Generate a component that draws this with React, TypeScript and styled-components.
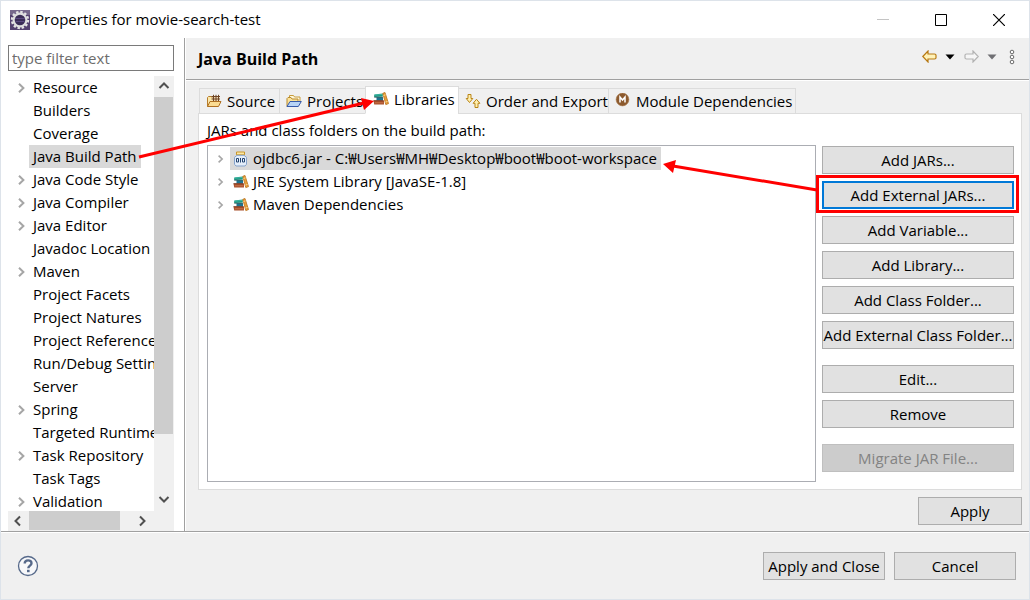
import React from "react";
import styled, { createGlobalStyle, css } from "styled-components";

const GlobalStyle = createGlobalStyle`
  * { box-sizing: border-box; }
  body {
    margin: 0;
    background: #f0f0f0;
    color: #000;
    font-family: "Open Sans", "Noto Sans CJK KR", sans-serif;
    font-size: 15px;
    line-height: 23px;
  }
  button, input { font: inherit; color: inherit; }
  ul { list-style: none; margin: 0; padding: 0; }
  svg { display: block; flex: none; }
`;

const Dialog = styled.div`
  position: relative;
  display: flex;
  flex-direction: column;
  height: 100vh;
  background: #f0f0f0;
  border: 1px solid #dde3ea;
`;

const TitleBar = styled.header`
  display: flex;
  align-items: center;
  flex: none;
  height: 37px;
  padding: 0 1px 0 9px;
  background: #fff;
`;

const WindowTitle = styled.span`
  flex: 1;
  margin-left: 5px;
  white-space: nowrap;
`;

const WindowButton = styled.button`
  display: flex;
  align-items: center;
  justify-content: center;
  width: 58px;
  height: 36px;
  padding: 0;
  border: 0;
  background: none;
`;

const Main = styled.main`
  display: flex;
  flex: 1;
  min-height: 0;
`;

const Sidebar = styled.nav`
  display: flex;
  flex-direction: column;
  flex: none;
  width: 184px;
  padding: 7px 10px 0 7px;
  gap: 5px;
  background: #fff;
  border-right: 1px solid #a0a0a0;
`;

const FilterInput = styled.input`
  width: 100%;
  height: 26px;
  padding: 0 3px;
  border: 1px solid #7a7a7a;
  border-radius: 0;
  background: #fff;
  outline: none;
  &::placeholder { color: #6d6d6d; opacity: 1; }
`;

const ScrollFrame = styled.div`
  display: grid;
  flex: 1;
  min-height: 0;
  grid-template-columns: minmax(0, 1fr) 20px;
  grid-template-rows: minmax(0, 1fr) 20px;
  background: #f0f0f0;
`;

const PageList = styled.ul`
  overflow: hidden;
  background: #fff;
`;

const PageRow = styled.li`
  display: flex;
  align-items: center;
  height: 23px;
`;

const Toggle = styled.span`
  display: flex;
  align-items: center;
  flex: none;
  width: 21px;
  padding-left: 9px;
`;

const PageLink = styled.a<{ $selected?: boolean }>`
  flex: none;
  padding: 0 4px;
  color: #000;
  text-decoration: none;
  white-space: nowrap;
  background: ${(p) => (p.$selected ? "#d9d9d9" : "transparent")};
`;

const ScrollTrack = styled.div<{ $horizontal?: boolean }>`
  display: flex;
  flex-direction: ${(p) => (p.$horizontal ? "row" : "column")};
  padding: ${(p) => (p.$horizontal ? "0 2px 0 0" : "0 0 2px")};
  background: #f0f0f0;
`;

const ScrollButton = styled.button`
  display: flex;
  align-items: center;
  justify-content: center;
  flex: none;
  width: 20px;
  height: 20px;
  padding: 0;
  border: 0;
  background: none;
`;

const ScrollRun = styled.div<{ $horizontal?: boolean }>`
  flex: 1;
  padding: ${(p) => (p.$horizontal ? "0 0 1px 1px" : "1px 1px 0 0")};
`;

const ScrollThumb = styled.div<{ $horizontal?: boolean; $size: number }>`
  background: #cdcdcd;
  width: ${(p) => (p.$horizontal ? p.$size + "%" : "100%")};
  height: ${(p) => (p.$horizontal ? "100%" : p.$size + "%")};
`;

const Page = styled.section`
  display: flex;
  flex-direction: column;
  flex: 1;
  min-width: 0;
  border-left: 1px solid #fff;
`;

const PageHeader = styled.div`
  display: flex;
  align-items: center;
  flex: none;
  height: 43px;
  padding: 0 14px 5px 12px;
  border-bottom: 1px solid #fff;
  box-shadow: inset 0 -1px #a0a0a0;
`;

const PageTitle = styled.h1`
  flex: 1;
  margin: 0;
  padding-top: 6px;
  font-size: 16px;
  font-weight: 700;
  line-height: 23px;
`;

const HistoryButton = styled.button<{ $gap: number }>`
  display: flex;
  padding: 0;
  margin-left: ${(p) => p.$gap}px;
  border: 0;
  background: none;
`;

const PageBody = styled.div`
  display: flex;
  flex-direction: column;
  flex: 1;
  min-height: 0;
  padding: 5px 7px 6px 12px;
`;

const TabList = styled.div`
  display: flex;
  align-items: flex-end;
  height: 28px;
  padding-left: 2px;
  z-index: 1;
`;

const Tab = styled.button<{ $active?: boolean; $width: number }>`
  display: flex;
  align-items: center;
  flex: none;
  width: ${(p) => p.$width}px;
  height: 26px;
  gap: 5px;
  padding: 0 0 0 6px;
  margin-left: -1px;
  border: 1px solid #dcdcdc;
  background: #f0f0f0;
  white-space: nowrap;
  ${(p) =>
    p.$active &&
    css`
      height: 28px;
      padding: 0 0 2px 7px;
      border-bottom-color: #fff;
      background: #fff;
    `}
`;

const TabPanel = styled.div`
  display: flex;
  flex-direction: column;
  flex: 1;
  min-height: 0;
  margin-top: -1px;
  padding: 5px 7px 7px 8px;
  border: 1px solid #dcdcdc;
  background: #fff;
`;

const Caption = styled.div`
  flex: none;
  margin-bottom: 3px;
`;

const Columns = styled.div`
  display: grid;
  flex: 1;
  min-height: 0;
  grid-template-columns: minmax(0, 1fr) 192px;
  gap: 6px;
`;

const EntryTree = styled.ul`
  && { padding-top: 1px; }
  border: 1px solid #abadb3;
  background: #fff;
  overflow: hidden;
`;

const EntryRow = styled.li`
  display: flex;
  align-items: center;
  height: 23px;
  padding-left: 9px;
`;

const Entry = styled.span<{ $selected?: boolean }>`
  display: flex;
  align-items: center;
  gap: 4px;
  padding: 0 4px 0 3px;
  margin-left: 5px;
  white-space: nowrap;
  background: ${(p) => (p.$selected ? "#d9d9d9" : "transparent")};
`;

const ButtonColumn = styled.div`
  display: flex;
  flex-direction: column;
  gap: 16px;
  padding-top: 1px;
`;

const ButtonGroup = styled.div`
  display: flex;
  flex-direction: column;
  gap: 7px;
`;

const PushButton = styled.button<{ $focused?: boolean; $width?: number }>`
  position: relative;
  flex: none;
  width: ${(p) => (p.$width ? p.$width + "px" : "100%")};
  height: 28px;
  padding: 0;
  border: 1px solid #adadad;
  border-radius: 0;
  background: #e1e1e1;
  line-height: 24px;
  white-space: nowrap;
  &:disabled {
    color: #838383;
    background: #cccccc;
    border-color: #bfbfbf;
  }
  ${(p) =>
    p.$focused &&
    css`
      border: 2px solid #0078d7;
      &::after {
        content: "";
        position: absolute;
        inset: -8px -7px -6px -8px;
        border: 3px solid #f00;
      }
    `}
`;

const ApplyRow = styled.div`
  display: flex;
  justify-content: flex-end;
  flex: none;
  margin-top: 7px;
`;

const Footer = styled.footer`
  display: flex;
  align-items: center;
  flex: none;
  gap: 9px;
  height: 68px;
  padding: 0 13px 0 16px;
  border-top: 1px solid #a0a0a0;
  box-shadow: inset 0 1px #fff;
`;

const HelpButton = styled.button`
  padding: 0;
  margin-right: auto;
  border: 0;
  background: none;
`;

const Annotations = styled.svg`
  position: absolute;
  top: -1px;
  left: -1px;
  pointer-events: none;
  z-index: 2;
`;

const Chevron = ({ size = 10, color = "#a6a6a6" }: { size?: number; color?: string }) => (
  <svg width={size} height={size} viewBox="0 0 10 10" fill="none" stroke={color} strokeWidth="2">
    <path d="M2 0.8 6.4 5 2 9.2" />
  </svg>
);

const rotations = { up: -90, down: 90, left: 180, right: 0 };
const ScrollArrow = ({ dir }: { dir: keyof typeof rotations }) => (
  <svg width="12" height="12" viewBox="0 0 12 12" fill="none" stroke="#505050" strokeWidth="2">
    <path d="M4 1.5 8.5 6 4 10.5" transform={`rotate(${rotations[dir]} 6 6)`} />
  </svg>
);

const EclipseIcon = () => (
  <svg width="20" height="20" viewBox="0 0 20 20">
    <rect width="20" height="20" fill="#54416f" />
    <path d="M0 0h20v5H0z" fill="#77698c" />
    <circle cx="10" cy="10" r="8" fill="none" stroke="#e4e4e4" strokeWidth="2.4" strokeDasharray="2.4 1.79" />
    <circle cx="10" cy="10" r="6.400" fill="#3b2d57" stroke="#dedede" strokeWidth="2.200" />
    <path d="M5 8.500h10M5.500 11.500h9" stroke="#5b4a80" />
  </svg>
);

const BooksIcon = () => (
  <svg width="16" height="16" viewBox="0 0 16 16">
    <path d="M1.200 3.400 9.800 2.600v3L1.200 6z" fill="#159a84" />
    <path d="M2 4.100 9.400 3.500" stroke="#4fc0ac" strokeWidth=".8" />
    <path d="M3.500 6.200h6.500v3.300H3.500z" fill="#1d7391" />
    <path d="M1.200 6.200h8.600" stroke="#1b4a4a" strokeWidth=".8" />
    <path d="M.5 9.500h10.500v4H1.200z" fill="#a8502c" />
    <path d="M.5 9.700h10" stroke="#6e2c17" strokeWidth=".8" />
    <path d="M2 11.800h8.500" stroke="#d07c50" strokeWidth=".8" />
    <path d="M9.800 2.300 12 1.500 15.500 12.600 12.800 13.600z" fill="#e8a03c" stroke="#b8701a" strokeWidth=".8" />
    <path d="M10.500 4.500l2-.6M12.400 11l2.200-.6" stroke="#fbd58a" />
  </svg>
);

const SourceIcon = () => (
  <svg width="16" height="16" viewBox="0 0 16 16">
    <path d="M1.500 13.500V4.500l1-1h3l1 1.500h6v3.500" fill="#fbe7a9" stroke="#b77d2b" />
    <path d="M6.500 3h7v5h-7z" fill="#efd9b4" />
    <path d="M5.500 3.500h8.500M5.500 6h8.500M7.500 1.800v6.200M10 1.800v6.200M12.500 1.800v6.200" stroke="#6f4524" />
    <path d="M1.500 13.500 4 8.500h11l-2.500 5z" fill="#fbdc92" stroke="#b07020" />
  </svg>
);

const ProjectsIcon = () => (
  <svg width="16" height="16" viewBox="0 0 16 16">
    <path d="M3.500 7V2.500h4l1 1.500h5.500V8" fill="#fff8dc" stroke="#c79c3d" />
    <path d="M1 13.500V5.500l1-1h3l1 1.500h6v3" fill="#fbe39a" stroke="#b98a2d" />
    <path d="M1 13.500 4 8.500h11.300l-3 5z" fill="#b8d4f6" stroke="#3659a8" />
  </svg>
);

const OrderIcon = () => (
  <svg width="16" height="16" viewBox="0 0 16 16" fill="#fff0b0" stroke="#b98416">
    <path d="M3 1.500h3v4h1.800L4.500 9.500 1.200 5.500H3z" />
    <path d="M10 14.500h3v-4.200h1.900L11.500 6.300 8.100 10.300H10z" />
  </svg>
);

const ModuleIcon = () => (
  <svg width="16" height="16" viewBox="0 0 16 16">
    <circle cx="7.500" cy="6.500" r="6.400" fill="#8c5a2e" stroke="#a97a4e" strokeWidth=".6" />
    <path d="M5 9.500v-5.500l2.500 3 2.500-3v5.500" fill="none" stroke="#fff" strokeWidth="1.500" />
  </svg>
);

const JarIcon = () => (
  <svg width="16" height="16" viewBox="0 0 16 16">
    <path d="M3.500 1h8v2.800h-8z" fill="#ffe9a0" stroke="#c8962a" />
    <path d="M4 4.300h7l2.500 2v7l-1.500 1.700H3L1.500 13.300v-7z" fill="#e4eefa" stroke="#86a3cb" />
    <path d="M3.500 7.500h2v3.500h-2zM7.500 7v4.500M9.500 7.500h2v3.500h-2z" fill="none" stroke="#26456f" />
  </svg>
);

const HistoryArrow = ({ forward }: { forward?: boolean }) => (
  <svg width="15" height="13" viewBox="0 0 15 13">
    <path
      d="M.8 6.500 6 1v3h6.500q1.500 0 1.500 1.200v2.600Q14 9 12.500 9H6v3z"
      transform={forward ? "rotate(180 7.500 6.500)" : undefined}
      fill={forward ? "#f6f6f6" : "#fff2b8"}
      stroke={forward ? "#b3b3b3" : "#b87a14"}
      strokeWidth="1.200"
    />
  </svg>
);

const Caret = ({ color }: { color: string }) => (
  <svg width="10" height="6" viewBox="0 0 10 6">
    <path d="M.5.500h9L5 5.500z" fill={color} />
  </svg>
);

const pages: { name: string; branch?: boolean }[] = [
  { name: "Resource", branch: true },
  { name: "Builders" },
  { name: "Coverage" },
  { name: "Java Build Path" },
  { name: "Java Code Style", branch: true },
  { name: "Java Compiler", branch: true },
  { name: "Java Editor", branch: true },
  { name: "Javadoc Location" },
  { name: "Maven", branch: true },
  { name: "Project Facets" },
  { name: "Project Natures" },
  { name: "Project References" },
  { name: "Run/Debug Settings" },
  { name: "Server" },
  { name: "Spring", branch: true },
  { name: "Targeted Runtimes" },
  { name: "Task Repository", branch: true },
  { name: "Task Tags" },
  { name: "Validation", branch: true },
];

const tabs = [
  { name: "Source", icon: <SourceIcon />, width: 81 },
  { name: "Projects", icon: <ProjectsIcon />, width: 87 },
  { name: "Libraries", icon: <BooksIcon />, width: 94 },
  { name: "Order and Export", icon: <OrderIcon />, width: 151 },
  { name: "Module Dependencies", icon: <ModuleIcon />, width: 188 },
];

const entries = [
  { name: "ojdbc6.jar - C:₩Users₩MH₩Desktop₩boot₩boot-workspace", icon: <JarIcon /> },
  { name: "JRE System Library [JavaSE-1.8]", icon: <BooksIcon /> },
  { name: "Maven Dependencies", icon: <BooksIcon /> },
];

const actions = [
  ["Add JARs...", "Add External JARs...", "Add Variable...", "Add Library...", "Add Class Folder...", "Add External Class Folder..."],
  ["Edit...", "Remove"],
  ["Migrate JAR File..."],
];

export default function App() {
  return (
    <>
      <GlobalStyle />
      <Dialog>
        <TitleBar>
          <EclipseIcon />
          <WindowTitle>Properties for movie-search-test</WindowTitle>
          <WindowButton aria-label="Minimize" disabled>
            <svg width="12" height="12"><path d="M0 5.500h12" stroke="#c4c4c4" /></svg>
          </WindowButton>
          <WindowButton aria-label="Maximize">
            <svg width="12" height="12"><path d="M.5.500h11v11H.5z" fill="none" stroke="#000" /></svg>
          </WindowButton>
          <WindowButton aria-label="Close">
            <svg width="12" height="12"><path d="M0 0l12 12M12 0L0 12" stroke="#000" strokeWidth="1.200" /></svg>
          </WindowButton>
        </TitleBar>

        <Main>
          <Sidebar>
            <FilterInput type="text" placeholder="type filter text" aria-label="type filter text" />
            <ScrollFrame>
              <PageList>
                {pages.map((p) => (
                  <PageRow key={p.name}>
                    <Toggle>{p.branch && <Chevron />}</Toggle>
                    <PageLink href="#" $selected={p.name === "Java Build Path"}>{p.name}</PageLink>
                  </PageRow>
                ))}
              </PageList>
              <ScrollTrack>
                <ScrollButton aria-label="Scroll up"><ScrollArrow dir="up" /></ScrollButton>
                <ScrollRun><ScrollThumb $size={86} /></ScrollRun>
                <ScrollButton aria-label="Scroll down"><ScrollArrow dir="down" /></ScrollButton>
              </ScrollTrack>
              <ScrollTrack $horizontal>
                <ScrollButton aria-label="Scroll left"><ScrollArrow dir="left" /></ScrollButton>
                <ScrollRun $horizontal><ScrollThumb $horizontal $size={88} /></ScrollRun>
                <ScrollButton aria-label="Scroll right"><ScrollArrow dir="right" /></ScrollButton>
              </ScrollTrack>
            </ScrollFrame>
          </Sidebar>

          <Page>
            <PageHeader>
              <PageTitle>Java Build Path</PageTitle>
              <HistoryButton aria-label="Back" $gap={0}><HistoryArrow /></HistoryButton>
              <HistoryButton aria-label="Back history" $gap={8}><Caret color="#000" /></HistoryButton>
              <HistoryButton aria-label="Forward" $gap={9}><HistoryArrow forward /></HistoryButton>
              <HistoryButton aria-label="Forward history" $gap={8}><Caret color="#6f6f73" /></HistoryButton>
              <HistoryButton aria-label="View menu" $gap={12}>
                <svg width="6" height="16" viewBox="0 0 6 16" fill="#fff" stroke="#6a6a6a">
                  <circle cx="3" cy="3" r="1.800" />
                  <circle cx="3" cy="8" r="1.800" />
                  <circle cx="3" cy="13" r="1.800" />
                </svg>
              </HistoryButton>
            </PageHeader>

            <PageBody>
              <TabList role="tablist">
                {tabs.map((t) => {
                  const active = t.name === "Libraries";
                  return (
                    <Tab key={t.name} role="tab" aria-selected={active} $active={active} $width={t.width}>
                      {t.icon}
                      {t.name}
                    </Tab>
                  );
                })}
              </TabList>
              <TabPanel role="tabpanel">
                <Caption id="entries-caption">JARs and class folders on the build path:</Caption>
                <Columns>
                  <EntryTree aria-labelledby="entries-caption">
                    {entries.map((e, i) => (
                      <EntryRow key={e.name}>
                        <Chevron size={8} />
                        <Entry $selected={i === 0}>
                          {e.icon}
                          {e.name}
                        </Entry>
                      </EntryRow>
                    ))}
                  </EntryTree>
                  <ButtonColumn>
                    {actions.map((group) => (
                      <ButtonGroup key={group[0]}>
                        {group.map((a) => (
                          <PushButton key={a} $focused={a === "Add External JARs..."} disabled={a === "Migrate JAR File..."}>
                            {a}
                          </PushButton>
                        ))}
                      </ButtonGroup>
                    ))}
                  </ButtonColumn>
                </Columns>
              </TabPanel>
              <ApplyRow>
                <PushButton $width={104}>Apply</PushButton>
              </ApplyRow>
            </PageBody>
          </Page>
        </Main>

        <Footer>
          <HelpButton aria-label="Help">
            <svg width="22" height="22" viewBox="0 0 22 22" fill="none">
              <circle cx="11" cy="11" r="9.500" fill="#f7f8fa" stroke="#56698a" strokeWidth="1.300" />
              <path d="M7.700 8.600c0-4.200 6.800-4.200 6.800-.4 0 2.400-3.200 2.400-3.200 5" stroke="#56698a" strokeWidth="2.400" />
              <path d="M10 14.800h2.600v2.400H10z" fill="#56698a" />
            </svg>
          </HelpButton>
          <PushButton $width={122}>Apply and Close</PushButton>
          <PushButton $width={122}>Cancel</PushButton>
        </Footer>

        <Annotations width="1030" height="600" viewBox="0 0 1030 600" aria-hidden="true">
          <g stroke="#f00" strokeWidth="3">
            <path d="M139 157 364 103" />
            <path d="M817 190 673 166" />
          </g>
          <path d="M374 101 361 98 364 110zM663 164 676 160 673 173z" fill="#f00" />
        </Annotations>
      </Dialog>
    </>
  );
}
